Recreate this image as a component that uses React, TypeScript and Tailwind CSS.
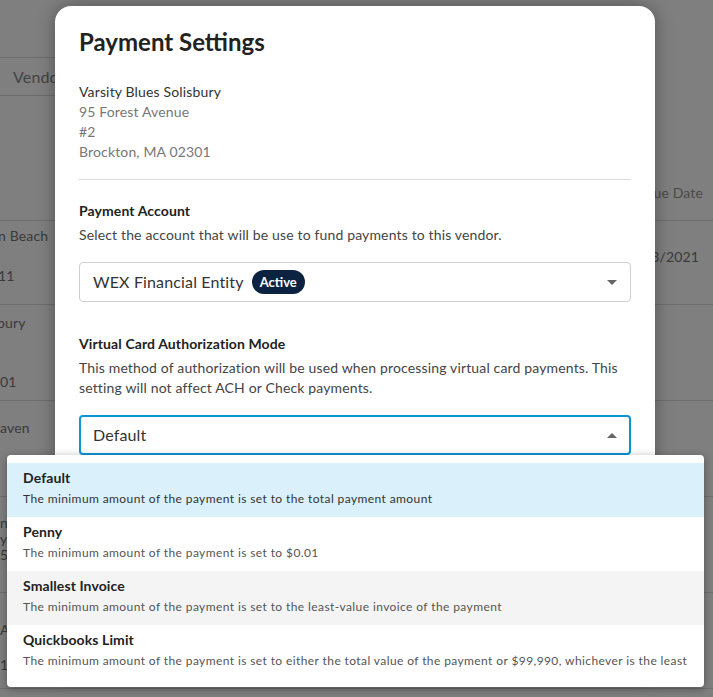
import React from "react";

const options = [
  { title: "Default", desc: "The minimum amount of the payment is set to the total payment amount" },
  { title: "Penny", desc: "The minimum amount of the payment is set to $0.01" },
  {
    title: "Smallest Invoice",
    desc: "The minimum amount of the payment is set to the least-value invoice of the payment",
  },
  {
    title: "Quickbooks Limit",
    desc: "The minimum amount of the payment is set to either the total value of the payment or $99,990, whichever is the least",
  },
];

function Caret({ up }: { up?: boolean }) {
  return (
    <svg width="10" height="5" viewBox="0 0 10 5" className="shrink-0">
      <path d={up ? "M0 5 L5 0 L10 5 Z" : "M0 0 L10 0 L5 5 Z"} fill="#666" />
    </svg>
  );
}

function Backdrop() {
  // dimmed page behind the modal
  return (
    <div className="h-full w-full text-[14px] tracking-[0.15px] text-[#3a3a3a]">
      <div className="pt-[57px]">
        <div className="-ml-[4px] flex h-[39px] w-[220px] items-center rounded-[5px] border border-[#6c6c6c] pl-4 text-[16px] text-[#444]">
          Vendor Name
        </div>
      </div>
      <div className="mt-[69px] flex h-[56px] items-center justify-end border-b border-[#6e6e6e] pr-[10px] text-[#4a4a4a]">
        Due Date
      </div>
      <div className="flex h-[84px] justify-between border-b border-[#6e6e6e]">
        <div className="-ml-[2px] flex flex-col pt-[5px] leading-5">
          <span>n Beach</span>
          <span className="mt-5">11</span>
        </div>
        <div className="pt-[25px] pr-[14px]">3/2021</div>
      </div>
      <div className="-ml-[3px] flex h-[96px] flex-col border-b border-[#6e6e6e] pt-[8px] leading-5">
        <span>bury</span>
        <span className="mt-[39px] ml-[3px]">01</span>
      </div>
      <div className="flex h-[96px] flex-col border-b border-[#6e6e6e] pt-[17px] leading-5">
        <span>aven</span>
      </div>
      <div className="flex h-[96px] flex-col border-b border-[#6e6e6e] pt-[18px] leading-4">
        <span>n</span>
        <span>y</span>
        <span>5</span>
      </div>
      <div className="flex h-[96px] flex-col border-b border-[#6e6e6e] pt-[27px] leading-5">
        <span>Av</span>
        <span className="mt-[15px]">1</span>
      </div>
    </div>
  );
}

export default function App() {
  return (
    <div
      className="relative h-[697px] w-full overflow-hidden bg-[#7f7f7f]"
      style={{ fontFamily: "Lato, 'Open Sans', sans-serif" }}
    >
      <Backdrop />

      {/* modal */}
      <div className="absolute left-[55px] top-[6px] w-[600px] rounded-[16px] bg-white px-6 pt-5 pb-10 shadow-[0_0_18px_rgba(0,0,0,0.35)]">
        <h1 className="text-[24px] leading-8 font-bold text-[#222]">Payment Settings</h1>

        <div className="mt-6 text-[14px] leading-5 tracking-[0.15px] text-[#777]">
          <div className="text-[#333]">Varsity Blues Solisbury</div>
          <div>95 Forest Avenue</div>
          <div>#2</div>
          <div>Brockton, MA 02301</div>
        </div>

        <div className="mt-[17px] border-t border-[#d9d9d9]" />

        <div className="mt-[21px] text-[14px] leading-5 font-bold tracking-[0.1px] text-[#222]">
          Payment Account
        </div>
        <p className="mt-1 text-[14px] leading-5 tracking-[0.15px] text-[#444]">
          Select the account that will be use to fund payments to this vendor.
        </p>
        <div className="mt-[17px] flex h-[40px] items-center rounded-[4px] border border-[#cfcfcf] pl-[13px] pr-[13px]">
          <span className="text-[16px] tracking-[0.15px] text-[#333]">WEX Financial Entity</span>
          <span className="ml-2 rounded-full bg-[#0b2341] px-2 py-[3px] text-[13px] leading-[18px] font-bold text-white">
            Active
          </span>
          <span className="flex-1" />
          <Caret />
        </div>

        <div className="mt-8 text-[14px] leading-5 font-bold tracking-[0.1px] text-[#222]">
          Virtual Card Authorization Mode
        </div>
        <p className="mt-1 text-[14px] leading-5 tracking-[0.15px] text-[#444]">
          This method of authorization will be used when processing virtual card payments. This
          setting will not affect ACH or Check payments.
        </p>
        <div className="mt-[17px] flex h-[40px] items-center rounded-[4px] border-2 border-[#0a95d6] pl-[12px] pr-[12px]">
          <span className="text-[16px] tracking-[0.15px] text-[#333]">Default</span>
          <span className="flex-1" />
          <Caret up />
        </div>
        <div className="h-[180px]" />
      </div>

      {/* open dropdown */}
      <div className="absolute left-[7px] top-[455px] w-[697px] rounded-[4px] bg-white py-2 shadow-[0_2px_8px_rgba(0,0,0,0.35)]">
        {options.map((o, i) => (
          <div
            key={o.title}
            className={
              "h-[54px] px-4 pt-[5px] " +
              (i === 0 ? "bg-[#daf0fb]" : i === 2 ? "bg-[#f4f4f4]" : "bg-white")
            }
          >
            <div className="text-[14px] leading-5 font-bold tracking-[0.1px] text-[#222]">{o.title}</div>
            <div
              className={
                "mt-[3px] text-[12px] leading-4 tracking-[0.4px] " +
                (i === 0 ? "text-[#333]" : "text-[#555]")
              }
            >
              {o.desc}
            </div>
          </div>
        ))}
      </div>
    </div>
  );
}
